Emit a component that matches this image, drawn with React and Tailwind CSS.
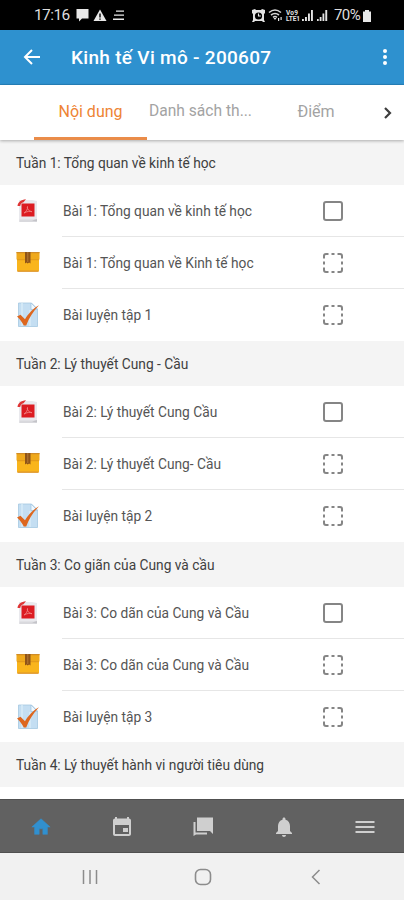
import React from "react";

const weeks = [
  {
    title: "Tuần 1: Tổng quan về kinh tế học",
    height: "h-[201px]",
    items: ["Bài 1: Tổng quan về kinh tế học", "Bài 1: Tổng quan về Kinh tế học", "Bài luyện tập 1"],
  },
  {
    title: "Tuần 2: Lý thuyết Cung - Cầu",
    height: "h-[201px]",
    items: ["Bài 2: Lý thuyết Cung Cầu", "Bài 2: Lý thuyết Cung- Cầu", "Bài luyện tập 2"],
  },
  {
    title: "Tuần 3: Co giãn của Cung và cầu",
    height: "h-[200px]",
    items: ["Bài 3: Co dãn của Cung và Cầu", "Bài 3: Co dãn của Cung và Cầu", "Bài luyện tập 3"],
  },
  { title: "Tuần 4: Lý thuyết hành vi người tiêu dùng", height: "h-[57px]", items: [] },
];

function PdfIcon() {
  return (
    <svg width="26" height="26" viewBox="0 0 26 26">
      <path d="M4 2h13l5 1v21H4z" fill="#e9e9ed" />
      <path d="M4.500 21.500h17v2.500h-17z" fill="#d9d9dd" />
      <path d="M17 22.500l5-1.500v2.500z" fill="#c3c3c8" />
      <path d="M2.500 8C3 4 6 1.500 11 1.200L8.500 4.200C6.500 4.500 5.500 6 5.200 8z" fill="#df3535" />
      <rect x="6.500" y="5.500" width="13" height="13" fill="#dc1c22" />
      <path d="M9 15c2-1 4-4 3.500-6.500c-.8 2 1.500 5 4.500 5.200c-2-.8-5-.3-8 1.300" fill="none" stroke="#f08080" strokeWidth="0.900" />
    </svg>
  );
}

function BoxIcon() {
  return (
    <svg width="26" height="26" viewBox="0 0 26 26">
      <path d="M2 9h22v11.500a1 1 0 0 1-1 1H3a1 1 0 0 1-1-1z" fill="#f9b51c" />
      <path d="M2.500 20.500h21v1.300h-21z" fill="#dc942c" />
      <path d="M1.500 2h23v7.500h-23z" fill="#efa91c" />
      <path d="M1.500 2h23v1.200h-23z" fill="#d08c27" />
      <path d="M2 9.300h22v.9H2z" fill="#dd941b" />
      <path d="M10 2h5.500v11.500l-1.400-1-1.400 1-1.300-1-1.400 1z" fill="#8e5418" />
      <path d="M12.300 2h1v10h-1z" fill="#b77a35" />
    </svg>
  );
}

function QuizIcon() {
  return (
    <svg width="26" height="26" viewBox="0 0 26 26">
      <path d="M3.500 1h13l6 6v17.500h-19z" fill="#c4def2" stroke="#a5c8e1" strokeWidth="0.800" />
      <path d="M7 1v23M15 8v16" stroke="#d7ebf8" strokeWidth="1.500" />
      <path d="M16 1v6.500h6.500z" fill="#eff8fe" stroke="#9fc3df" strokeWidth="0.700" />
      <path d="M2 14.500l3.500-1.800 4.500 4.500C13 12 18 6.500 24 3.200C18 9.500 14 16 11.200 23.500H8.800C7 20 5 17 2 14.500z" fill="#dd671f" />
    </svg>
  );
}

function CheckBox({ dashed }) {
  return (
    <svg width="22" height="22" viewBox="0 0 22 22" fill="none" stroke="#858585" strokeWidth="2">
      {dashed ? (
        <>
          <path d="M2 6.500V4q0-2 2-2h2.500M15.500 2h2.500q2 0 2 2v2.500M20 15.500v2.500q0 2-2 2h-2.500M6.500 20H4q-2 0-2-2v-2.500" />
          <path d="M9.500 2h3M9.500 20h3M2 9.500v3M20 9.500v3" />
        </>
      ) : (
        <rect x="2" y="2" width="18" height="18" rx="2" />
      )}
    </svg>
  );
}

function StatusBar() {
  return (
    <div className="flex h-[30px] shrink-0 items-center bg-black pl-[34px] pt-px text-[15.5px] text-[#dedede]">
      <span className="w-[37px] whitespace-nowrap tracking-[-0.6px]">17:16</span>
      <svg className="ml-[4px]" width="50" height="16" viewBox="0 0 50 16" fill="#e8e8e8">
        <path d="M1.500 1h12v9.500H7l-3 3v-3H1.500z" />
        <path d="M25 1.500L31.500 13h-13z" />
        <path d="M24.300 5.500h1.400v4h-1.400zm0 5h1.400v1.200h-1.400z" fill="#000" />
        <path d="M41 2.500h8v1.300h-8zm-2 4h10v1.300H39zm-1 4h11v1.500H38z" />
      </svg>
      <svg className="ml-[126px]" width="80" height="18" viewBox="0 0 80 18" fill="#e3e3e3">
        <path d="M1 3l3-1 1 1h5l1-1 3 1v3l-1 1v6l1 2h-2l-1-1H4l-1 1H1l1-2V7L1 6z" />
        <circle cx="7.500" cy="9" r="3.600" fill="#000" />
        <path d="M7.500 6.500V9h2.300" fill="none" stroke="#eee" strokeWidth="1.100" />
        <g fill="none" stroke="#d5d5d5" strokeWidth="1.600">
          <path d="M18 5.500q6-5 12 0M20 8q4-3 8 0M22 10.300q2-1.500 4 0" />
        </g>
        <path d="M22.500 11h3L24 13zM27 11h1.200v3H27zm2.500-1h1.200v3h-1.200z" />
        <text x="35" y="7.500" fontSize="6.500" fontWeight="700" textLength="12">Vo9</text>
        <text x="35" y="14" fontSize="6.500" fontWeight="700" textLength="14">LTE1</text>
        <path d="M51 12h1.900v2H51zm3-2h1.900v4H54zm3-3.500h1.900V14H57zm3-3.500h1.900v11H60zM66 12h1.700v2H66zm2.700-2h1.800v4h-1.800zm2.800-3.500h1.800V14h-1.800zm2.800-3.500h1.900v11h-1.900z" />
      </svg>
      <span className="ml-[3px] w-[28px] whitespace-nowrap text-[15px] tracking-[-0.6px]">70%</span>
      <svg className="mt-px" width="11" height="14" viewBox="0 0 11 14" fill="#e8e8e8">
        <path d="M3 1h4v1.500h2V13H1V2.500h2z" />
      </svg>
    </div>
  );
}

function Header() {
  return (
    <header className="flex h-[55px] shrink-0 items-center border-b border-[#2583bd] bg-[#2e91cf] text-white">
      <svg className="ml-[23px]" width="18" height="18" viewBox="0 0 18 18" fill="none" stroke="currentColor" strokeWidth="2">
        <path d="M17 9H2.500M9 2L2 9l7 7" />
      </svg>
      <h1 className="ml-[30px] grow whitespace-nowrap pt-[2px] text-[19px] font-medium tracking-[0.3px]">Kinh tế Vi mô - 200607</h1>
      <svg className="mr-[16px]" width="6" height="18" viewBox="0 0 6 18" fill="currentColor">
        <circle cx="3" cy="3" r="2" />
        <circle cx="3" cy="9" r="2" />
        <circle cx="3" cy="15" r="2" />
      </svg>
    </header>
  );
}

function Tabs() {
  return (
    <nav className="relative z-10 flex h-[55px] shrink-0 bg-white pl-[34px] text-[16px] text-[#a3a3a3] shadow-[0_1px_3px_rgba(0,0,0,0.3)]">
      <div className="flex w-[113px] items-center justify-center border-b-[3px] border-[#ea8c49] pt-px text-[#ee8434]">Nội dung</div>
      <div className="flex w-[107px] items-center justify-center whitespace-nowrap pb-px text-[15.6px]">Danh sách th...</div>
      <div className="flex w-[124px] items-center justify-center pb-[2px]">Điểm</div>
      <div className="flex items-center pl-[5px]">
        <svg width="10" height="14" viewBox="0 0 10 14" fill="none" stroke="#3d3d3d" strokeWidth="2.200">
          <path d="M2 2l5 5-5 5" />
        </svg>
      </div>
    </nav>
  );
}

const icons = [PdfIcon, BoxIcon, QuizIcon];

function Week({ week }) {
  return (
    <section className={`${week.height} shrink-0 overflow-hidden bg-white`}>
      <h2 className="flex h-[45px] items-center whitespace-nowrap bg-[#f4f4f4] pl-[16px] pt-px text-[13.75px] text-[#404040]">{week.title}</h2>
      {week.items.map((item, i) => {
        const Icon = icons[i];
        return (
          <div key={i} className="flex h-[52px] pl-[15px]">
            <div className="flex w-[47px] items-center">
              <Icon />
            </div>
            <div className={`flex grow items-center pl-px ${i < 2 ? "border-b border-[#e6e6e6]" : ""}`}>
              <span className="w-[259px] whitespace-nowrap pt-px text-[13.75px] text-[#555]">{item}</span>
              <CheckBox dashed={i > 0} />
            </div>
          </div>
        );
      })}
    </section>
  );
}

function BottomNav() {
  return (
    <nav className="grid h-[54px] shrink-0 grid-cols-[repeat(5,81px)] place-items-center border-y border-y-[#505050] bg-[#616161] pl-[0.5px] pt-[2px] text-[#cfcfcf]">
      <svg width="22" height="22" viewBox="0 0 24 24" fill="#3190cf" stroke="#3190cf" strokeWidth="0.600">
        <path d="M10 20v-6h4v6h5v-8h3L12 3 2 12h3v8z" />
      </svg>
      <svg width="24" height="24" viewBox="0 0 24 24" fill="currentColor">
        <path d="M18 13h-5v4h5zM17 2v1.500H7V2H5v1.500C3.900 3.500 3 4.400 3 5.500V19c0 1.100.9 2 2 2h14c1.100 0 2-.9 2-2V5.500c0-1.100-.9-2-2-2V2zm2 17H5V10h14z" />
      </svg>
      <svg width="24" height="24" viewBox="0 0 24 24" fill="currentColor">
        <path d="M6 2.500h16V19l-3-3H6z" />
        <path d="M2.500 7h2v10.500H16v2H5l-2.500 1.500z" />
      </svg>
      <svg width="24" height="24" viewBox="0 0 24 24" fill="currentColor">
        <path d="M12 22c1.100 0 2-.9 2-2h-4c0 1.100.9 2 2 2m6-6v-5c0-3.070-1.640-5.640-4.500-6.320V4c0-.83-.67-1.500-1.500-1.500s-1.500.67-1.500 1.500v.68C7.630 5.360 6 7.920 6 11v5l-2 2v1h16v-1z" />
      </svg>
      <svg width="20" height="14" viewBox="0 0 20 14" fill="currentColor">
        <path d="M.5 1h19v2H.5zm0 5h19v2H.5zm0 5h19v2H.5z" />
      </svg>
    </nav>
  );
}

function SystemNav() {
  return (
    <div className="flex h-[47px] shrink-0 items-center bg-[#f1f1f1] pl-[82px] text-[#8c8c8c]">
      <svg width="16" height="16" viewBox="0 0 16 16" fill="none" stroke="currentColor" strokeWidth="1.500">
        <path d="M1.500 1v14M8 1v14M14.500 1v14" />
      </svg>
      <svg className="ml-[96px]" width="18" height="18" viewBox="0 0 18 18" fill="none" stroke="currentColor" strokeWidth="1.600">
        <rect x="1.500" y="1.500" width="15" height="15" rx="5" />
      </svg>
      <svg className="ml-[99px]" width="10" height="16" viewBox="0 0 10 16" fill="none" stroke="currentColor" strokeWidth="1.500">
        <path d="M8.500 1L1.500 8l7 7" />
      </svg>
    </div>
  );
}

export default function App() {
  return (
    <div className="flex h-[900px] w-[404px] flex-col overflow-hidden bg-white font-[Roboto,sans-serif]">
      <StatusBar />
      <Header />
      <Tabs />
      <main className="flex h-[659px] shrink-0 flex-col overflow-hidden">
        {weeks.map((week) => (
          <Week key={week.title} week={week} />
        ))}
      </main>
      <BottomNav />
      <SystemNav />
    </div>
  );
}
